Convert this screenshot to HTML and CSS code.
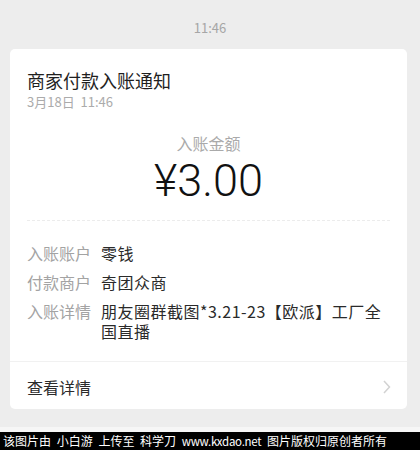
FILE: index.html
```html
<!DOCTYPE html>
<html lang="zh-CN">
<head>
<meta charset="utf-8">
<title>商家付款入账通知</title>
<link rel="stylesheet" href="styles.css">
</head>
<body>
<div class="page">
  <div class="time">11:46</div>
  <div class="card">
    <div class="body">
      <div class="title">商家付款入账通知</div>
      <div class="date">3月18日&nbsp;&nbsp;11:46</div>
      <div class="amount-label">入账金额</div>
      <div class="amount">¥3.00</div>
      <div class="dash"></div>
      <div class="rows">
        <div class="row"><span class="label">入账账户</span><span class="value">零钱</span></div>
        <div class="row"><span class="label">付款商户</span><span class="value">奇团众商</span></div>
        <div class="row"><span class="label">入账详情</span><span class="value">朋友圈群截图*3.21-23【欧派】工厂全国直播</span></div>
      </div>
    </div>
    <div class="footer">
      <span class="more">查看详情</span>
      <svg class="chev" width="8" height="14" viewBox="0 0 8 14"><path d="M1 1 L6.5 7 L1 13" fill="none" stroke="#d2d2d2" stroke-width="1.5"/></svg>
    </div>
  </div>
  <div class="gap"></div>
  <div class="strip"></div>
  <div class="bar">该图片由 小白游 上传至 科学刀 <span class="url">www.kxdao.net</span> 图片版权归原创者所有</div>
</div>
</body>
</html>
```
FILE: styles.css
```css
* { box-sizing: border-box; }
html, body { margin: 0; padding: 0; }
body {
  background: #ededed;
  font-family: "Noto Sans CJK SC", "Noto Sans", sans-serif;
  width: 420px;
  height: 450px;
  overflow: hidden;
}
.page { display: flex; flex-direction: column; height: 450px; }
.time {
  height: 49px;
  padding-top: 19px;
  line-height: 18px;
  font-size: 13px;
  color: #a6a6a6;
  text-align: center;
}
.card {
  margin: 0 13px 0 10px;
  height: 360px;
  background: #fff;
  border-radius: 5px;
  display: flex;
  flex-direction: column;
}
.body { padding: 19px 17px 0 17px; }
.title { font-size: 18px; line-height: 24px; color: #1f1f1f; }
.date { font-size: 13px; line-height: 18px; color: #ababab; margin-top: 1px; }
.amount-label {
  margin-top: 22px;
  font-size: 16px;
  line-height: 20px;
  color: #aaaaaa;
  text-align: center;
}
.amount {
  margin-top: 4px;
  font-family: Roboto, "Liberation Sans", sans-serif;
  font-weight: 300;
  font-size: 45px;
  line-height: 48px;
  color: #111;
  text-align: center;
}
.dash {
  margin-top: 15px;
  border-top: 1px dashed #ececec;
}
.rows {
  margin-top: 22px;
  display: flex;
  flex-direction: column;
  gap: 9px;
}
.row { display: flex; font-size: 16px; line-height: 20px; }
.label { width: 74px; flex: none; color: #a3a3a3; }
.value { flex: 1; color: #2a2a2a; letter-spacing: 0.5px; }
.footer {
  margin-top: auto;
  border-top: 1px solid #f1f1f1;
  height: 48px;
  display: flex;
  align-items: center;
  justify-content: space-between;
  padding: 2px 16px 0 17px;
}
.more { font-size: 16px; line-height: 20px; color: #2b2b2b; }
.chev { display: block; }
.gap { height: 18px; }
.strip { height: 5px; background: #f6f6f6; }
.bar {
  flex: 1;
  background: #000;
  color: #fff;
  font-size: 12px;
  line-height: 18px;
  padding-left: 3px;
  white-space: nowrap;
  word-spacing: 3px;
}
.url { font-size: 11.5px; letter-spacing: -0.3px; }
```
